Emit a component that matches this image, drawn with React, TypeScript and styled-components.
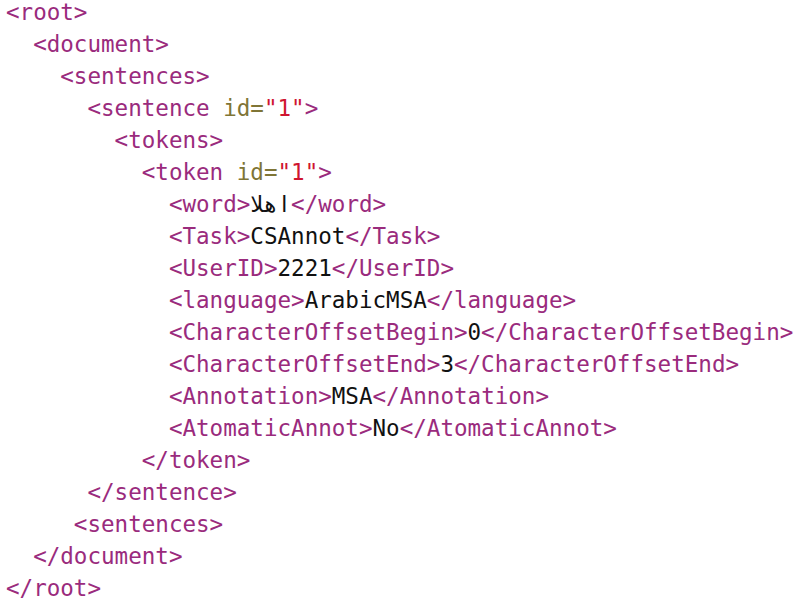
import React from "react";
import styled, { createGlobalStyle } from "styled-components";

const Global = createGlobalStyle`
  html, body { margin: 0; padding: 0; background: #ffffff; }
  body { width: 796px; height: 610px; overflow: hidden; }
`;

const Code = styled.pre`
  margin: -4px 0 0 0;
  padding: 0 0 0 6px;
  font-family: "DejaVu Sans Mono", "Liberation Mono", monospace;
  font-size: 22.55px;
  line-height: 32px;
  color: #111111;
  display: flex;
  flex-direction: column;
`;

const Line = styled.div<{ $indent: number }>`
  white-space: pre;
  padding-left: ${(p) => p.$indent}ch;
  height: 32px;
`;

const Tag = styled.span`
  color: #9a2b7d;
`;

const Attr = styled.span`
  color: #7f7536;
`;

const Str = styled.span`
  color: #cf1530;
`;

const Val = styled.span`
  color: #111111;
`;

type Seg = [string, "t" | "a" | "s" | "v"];

const lines: { i: number; s: Seg[] }[] = [
  { i: 0, s: [["<root>", "t"]] },
  { i: 2, s: [["<document>", "t"]] },
  { i: 4, s: [["<sentences>", "t"]] },
  { i: 6, s: [["<sentence ", "t"], ["id=", "a"], ['"1"', "s"], [">", "t"]] },
  { i: 8, s: [["<tokens>", "t"]] },
  { i: 10, s: [["<token ", "t"], ["id=", "a"], ['"1"', "s"], [">", "t"]] },
  { i: 12, s: [["<word>", "t"], ["اهلا", "v"], ["</word>", "t"]] },
  { i: 12, s: [["<Task>", "t"], ["CSAnnot", "v"], ["</Task>", "t"]] },
  { i: 12, s: [["<UserID>", "t"], ["2221", "v"], ["</UserID>", "t"]] },
  { i: 12, s: [["<language>", "t"], ["ArabicMSA", "v"], ["</language>", "t"]] },
  { i: 12, s: [["<CharacterOffsetBegin>", "t"], ["0", "v"], ["</CharacterOffsetBegin>", "t"]] },
  { i: 12, s: [["<CharacterOffsetEnd>", "t"], ["3", "v"], ["</CharacterOffsetEnd>", "t"]] },
  { i: 12, s: [["<Annotation>", "t"], ["MSA", "v"], ["</Annotation>", "t"]] },
  { i: 12, s: [["<AtomaticAnnot>", "t"], ["No", "v"], ["</AtomaticAnnot>", "t"]] },
  { i: 10, s: [["</token>", "t"]] },
  { i: 6, s: [["</sentence>", "t"]] },
  { i: 5, s: [["<sentences>", "t"]] },
  { i: 2, s: [["</document>", "t"]] },
  { i: 0, s: [["</root>", "t"]] },
];

const render = ([text, kind]: Seg, k: number) => {
  if (kind === "t") return <Tag key={k}>{text}</Tag>;
  if (kind === "a") return <Attr key={k}>{text}</Attr>;
  if (kind === "s") return <Str key={k}>{text}</Str>;
  return <Val key={k}>{text}</Val>;
};

export default function App() {
  return (
    <>
      <Global />
      <Code>
        {lines.map((l, idx) => (
          <Line key={idx} $indent={l.i}>
            {l.s.map(render)}
          </Line>
        ))}
      </Code>
    </>
  );
}
